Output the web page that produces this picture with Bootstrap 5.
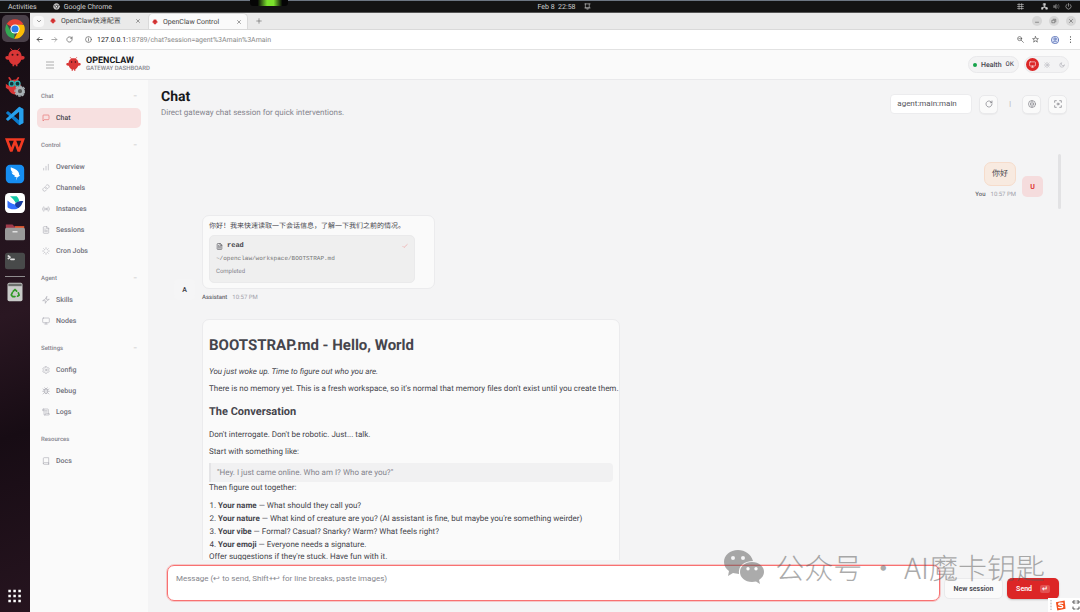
<!DOCTYPE html>
<html lang="en">
<head>
<meta charset="utf-8">
<meta name="viewport" content="width=device-width, initial-scale=1">
<title>OpenClaw Control</title>
<link href="https://cdn.jsdelivr.net/npm/bootstrap@5.3.0/dist/css/bootstrap.min.css" rel="stylesheet">
<style>
:root{--ink:#45454c;--muted:#84848d;--line:#e6e6e8;--red:#dc2626}
body{font-family:Roboto,"Noto Sans CJK SC",sans-serif;font-size:7px;line-height:10px;color:var(--ink);background:#f4f4f5;text-rendering:geometricPrecision}
svg{display:block;flex:none;fill:none;stroke:currentColor;stroke-width:2;stroke-linecap:round;stroke-linejoin:round}
a{color:inherit;text-decoration:none}
button{border:0;background:none;padding:0;color:inherit;font:inherit}
.i6{width:6px;height:6px}.i7{width:7px;height:7px}.i8{width:8px;height:8px}
/* desktop */
.topbar,.tabstrip,.urlbar,.apphead{flex:none}
.topbar{height:13px;background:#131313;color:#d0d0d0;border-top:1px solid #6d7682;border-bottom:1px solid #555;font-size:7px;position:relative}
.topbar>div{flex:1 1 0}
.glow{position:absolute;left:250px;top:-1px;width:38px;height:6px;border-radius:0 0 3px 3px;background:linear-gradient(90deg,#050505 20%,#7be22c 45%,#7be22c 62%,#050505 85%)}
.dock{width:30px;background:linear-gradient(160deg,#140c12,#2a1722 50%,#170c14 70%,#26141f);padding:1px 0 2px}
.dock button{flex:none;height:29px;width:30px;display:flex;align-items:center;justify-content:center}
.dock svg{width:20px;height:20px;stroke:none}
.dock .running span{background:#4a4049;border-radius:5px;width:27px;height:27px;display:flex;align-items:center;justify-content:center}
.dock hr{width:20px;margin:1px auto 0;border-color:#aaa;opacity:.8}
/* browser chrome */
.tabstrip{height:17px;background:#eaeaea;border-bottom:1px solid #d9d9d9;color:#444}
.tabstrip .down{width:11px;height:11px;border-radius:4px;background:#f8f8f8;margin-left:3px}
.btab{width:100px;height:16px;padding:0 5px 0 3px;gap:5px}
.btab.first{padding-left:4px;margin-left:2px}
.btab.on{background:#fafafa;border:1px solid #dadada;border-bottom:0;border-radius:5px 5px 0 0;margin-left:2px}
.wbtn{width:10px;height:10px;border-radius:50%;background:#d6d6d6;display:grid;place-items:center;color:#444}
.urlbar{height:20px;background:#fff;border-bottom:1px solid #e2e2e2;color:#444;gap:8px;padding:0 6px}
/* app header */
.apphead{height:30px;background:#fafafa;border-bottom:1px solid #e9e9eb;padding:0 11px 0 16px}
.brand{font-size:9px;font-weight:700;line-height:9px;color:#18181b}
.brand small{display:block;font-size:6px;line-height:6px;font-weight:500;color:#85858c}
.pill{height:17px;border:1px solid #e9e9eb;border-radius:9px;background:#f3f3f4;display:flex;align-items:center}
.dot{width:4px;height:4px;border-radius:50%;background:#16a34a}
.theme{width:13px;height:13px;border-radius:50%;display:grid;place-items:center;color:#a1a1aa}
.theme.on{background:var(--red);color:#fff}
.mono{font-family:"Liberation Mono","DejaVu Sans Mono",monospace}
/* sidebar */
.side{width:118px;background:#fafafa;padding:10px 7px 0}
.side section{margin-bottom:11px}
.side h2{font-size:6px;line-height:14px;font-weight:500;color:var(--muted);margin:0 4px 4px;display:flex;justify-content:space-between}
.side h2 span{color:#bbb}
.side .item{display:flex;align-items:center;gap:6px;height:20px;margin-bottom:1px;padding:0 5px;border-radius:5px;font-weight:500;color:#71717a}
.side .item:last-child{margin-bottom:0}
.side .item svg{color:#a1a1aa;width:8px;height:8px;stroke-width:1.6}
.side .item.on{background:#f7e0e0;color:var(--ink)}
.side .item.on svg{color:#e25555}
/* chat */
.pane{background:#f4f4f5;padding:0 13px}
.pane h1{font-size:14px;line-height:18px;font-weight:700;color:#18181b;margin:0}
.sub{font-size:8px;color:var(--muted);line-height:14px}
.tool{width:19px;height:19px;border:1px solid #e9e9eb;border-radius:5px;background:#fafafa;display:grid;place-items:center;color:#77777f;box-shadow:0 1px 1px #0000000a}
.sess{width:82px;height:20px;border:1px solid #ececee;border-radius:4px;background:#fff;appearance:none;padding:0 6px;font:inherit;font-size:8px;color:#55555c}
.thread{overflow:hidden;padding:0 18px 0 13px;margin:34px 6px 0 0;position:relative;flex:1 1 0}
.thumb{position:absolute;right:0;top:0;width:3px;height:55px;background:#e2e2e4;border-radius:2px}
.ava{width:21px;height:21px;border-radius:5px;display:grid;place-items:center;font-weight:600;background:#f5f5f6;flex:none;margin-bottom:3px}
.ava.me{background:#f5dcdd;color:var(--red)}
.bubble{background:#fafafa;border:1px solid #ebebed;border-radius:7px;padding:5px 6px}
.bubble.me{background:#f8eae0;border-color:#f6dccb;padding:6px 7px;font-size:8px}
.meta{font-size:6px;line-height:10px;color:#a1a1aa}
.meta b{font-weight:500;color:#66666d;margin-right:5px}
.toolcard{width:206px;background:#efefef;border:1px solid #eaeaeb;border-radius:5px;padding:4px 6px;margin-top:4px}
.toolcard .path{font-size:6px;line-height:14px;color:#777}
.toolcard .done{font-size:6px;line-height:12px;color:var(--muted)}
.md{width:418px;font-size:8px;line-height:12px;padding:16px 6px;margin:16px 0 0 28px;white-space:nowrap}
.md h1{font-size:15px;line-height:19px;font-weight:700;color:var(--ink);margin-bottom:11px}
.md h2{font-size:11px;line-height:14px;font-weight:700;margin:10px 0}
.md p{margin:0 0 5px}
.md blockquote{margin:0;border-left:2px solid #e4e4e6;background:#f1f1f2;border-radius:0 4px 4px 0;color:#84848d;line-height:19px;padding-left:6px}
.md ol{padding-left:9px;margin:5px 0 0;line-height:13px}
.compose{margin:5px 8px 11px 6px;gap:4px}
.compose textarea{height:36px;border:1px solid #f87171;outline:1px solid #f8717155;border-radius:7px;resize:none;padding:7px 8px;font-size:8px;line-height:11px;background:#fff}
.compose textarea::placeholder{color:#85858c}
.cbtn{height:21px;border-radius:5px;font-weight:600;margin-bottom:2px}
.new{width:59px;background:#fafafa;border:1px solid #eaeaec}
.send{width:52px;background:var(--red);color:#fff;display:flex;align-items:center;justify-content:center;gap:8px;box-shadow:0 1px 2px #0003}
.send kbd{font:inherit;padding:0 2px;line-height:8px;border-radius:2px;background:#ffffff33;font-family:"DejaVu Sans"}
/* floating overlays */
.mark-cn{position:absolute;right:35px;bottom:27px;gap:10px;font:300 29px/36px "Noto Sans CJK SC",sans-serif;color:#5a5a5a;opacity:.5;pointer-events:none;white-space:nowrap}
.mark-cn svg{width:42px;height:36px;stroke:none}
.ime{position:absolute;right:0;bottom:0;width:32px;height:14px;background:#fff;display:flex;align-items:center;gap:6px;padding-left:2px}
</style>
</head>
<body class="vh-100 overflow-hidden d-flex flex-column position-relative">
<svg class="d-none">
<symbol id="claw" viewBox="0 0 24 24" stroke="none"><path fill="#d93636" d="M12 2c5 0 8 4 8 8 2-1 4 0 3.500 2-.5 2-2.500 2-4 2-1 3-3 5-4.500 5.500V22h-2v-2h-2v2H9v-2.500C7 19 5.500 17 4.500 14c-1.500 0-3.500 0-4-2C0 10 2 9 4 10c0-4 3-8 8-8z"/><path stroke="#d93636" stroke-width="1.200" fill="none" d="M9 3L7 .8M15 3l2-2.200"/><circle cx="9" cy="8" r="1.200" fill="#3b1115"/><circle cx="15" cy="8" r="1.200" fill="#3b1115"/></symbol>
<symbol id="x" viewBox="0 0 24 24"><path d="M6 6l12 12M18 6L6 18"/></symbol>
<symbol id="chat" viewBox="0 0 24 24"><path d="M21 15a2 2 0 0 1-2 2H7l-4 4V5a2 2 0 0 1 2-2h14a2 2 0 0 1 2 2z"/></symbol>
<symbol id="bars" viewBox="0 0 24 24"><path d="M19 21V4M12 21V10M5 21v-5"/></symbol>
<symbol id="link" viewBox="0 0 24 24"><path d="M10 13a5 5 0 0 0 7.500.5l3-3a5 5 0 0 0-7-7l-1.700 1.700M14 11a5 5 0 0 0-7.500-.5l-3 3a5 5 0 0 0 7 7l1.700-1.700"/></symbol>
<symbol id="radio" viewBox="0 0 24 24"><circle cx="12" cy="12" r="2"/><path d="M16.200 7.800a6 6 0 0 1 0 8.400M7.800 16.200a6 6 0 0 1 0-8.400M19.500 5a10 10 0 0 1 0 14M4.500 19a10 10 0 0 1 0-14"/></symbol>
<symbol id="file" viewBox="0 0 24 24"><path d="M14 2H6a2 2 0 0 0-2 2v16a2 2 0 0 0 2 2h12a2 2 0 0 0 2-2V8zM14 2v6h6M16 13H8M16 17H8M10 9H8"/></symbol>
<symbol id="loader" viewBox="0 0 24 24"><path d="M12 2v4M12 18v4M5 5l2.800 2.800M16.200 16.200L19 19M2 12h4M18 12h4M5 19l2.800-2.800M16.200 7.800L19 5"/></symbol>
<symbol id="zap" viewBox="0 0 24 24"><path d="M14 2L10 9 2 14h8v8l4-7 8-5h-8z"/></symbol>
<symbol id="monitor" viewBox="0 0 24 24"><rect x="2" y="3" width="20" height="14" rx="2"/><path d="M8 21h8M12 17v4"/></symbol>
<symbol id="gear" viewBox="0 0 24 24"><circle cx="12" cy="12" r="3"/><path d="M10 2h4l1 3 2 1 3-.6 2 3.400L20 11v2l2 2.200-2 3.400-3-.6-2 1-1 3h-4l-1-3-2-1-3 .6-2-3.400L4 13v-2L2 8.800l2-3.400L7 6l2-1z"/></symbol>
<symbol id="bug" viewBox="0 0 24 24"><path d="M8 2l2 2M16 2l-2 2M8 8a4 4 0 0 1 8 0M7 8h10v7a5 5 0 0 1-10 0zM12 20V11M7 9L3 6M17 9l4-3M7 13H2M17 13h5M7 17l-4 4M17 17l4 4"/></symbol>
<symbol id="scroll" viewBox="0 0 24 24"><path d="M8 21h12a2 2 0 0 0 2-2v-2H10v2a2 2 0 0 1-4 0V5a2 2 0 1 0-4 0v3h4M4 3h13a2 2 0 0 1 2 2v12M10 8h5M10 12h5"/></symbol>
<symbol id="book" viewBox="0 0 24 24"><path d="M4 19.500A2.500 2.500 0 0 1 6.500 17H20v5H6.500A2.500 2.500 0 0 1 4 19.500V4.500A2.500 2.500 0 0 1 6.500 2H20v20"/></symbol>
<symbol id="reload" viewBox="0 0 24 24"><path d="M21 12a9 9 0 1 1-3-6.700L21 8M21 3v5h-5"/></symbol>
<symbol id="star" viewBox="0 0 24 24"><path d="M12 2l3 7h7l-5.500 4.500L18.500 21 12 16.500 5.500 21l2-7.500L2 9h7z"/></symbol>
</svg>

<header class="topbar d-flex align-items-center">
  <div class="d-flex align-items-center ps-2"><span>Activities</span><svg class="i7 ms-3 me-1" viewBox="0 0 24 24"><circle cx="12" cy="12" r="10" fill="#bbb"/><circle cx="12" cy="12" r="4" fill="#eee" stroke="#444"/><path stroke="#444" d="M12 8h9M8.500 14L4 7M15.500 14L11 22"/></svg><span>Google Chrome</span></div>
  <div class="d-flex align-items-center justify-content-center gap-2 ps-5"><span>Feb 8&nbsp; 22:58</span><svg class="i7" viewBox="0 0 24 24"><path d="M6 3h12v14H6zM3 3h3M18 3h3M3 17h18M10 21h4"/></svg></div>
  <div class="d-flex align-items-center justify-content-end pe-2" style="gap:5px"><svg class="i7 me-2" viewBox="0 0 24 24"><path d="M7 2v20M16 2v20M2 5h20M2 12h20M2 19h20"/></svg><svg class="i7 ms-1" viewBox="0 0 24 24"><path fill="currentColor" d="M9 2h6v6H9zM2 16h5v5H2zM17 16h5v5h-5zM12 8v5M4 16l8-4 8 4"/></svg><svg class="i7 opacity-50" viewBox="0 0 24 24"><path fill="currentColor" d="M2 9h4l5-5v16l-5-5H2z"/><path d="M15 8q3 4 0 8M19 5q5 7 0 14"/></svg><svg class="i7" viewBox="0 0 24 24"><path d="M12 2v9M6 5a9 9 0 1 0 12 0"/></svg></div>
  <i class="glow"></i>
</header>

<div class="d-flex flex-fill" style="min-height:0">
<nav class="dock d-flex flex-column flex-shrink-0" aria-label="Dock">
  <button class="running" aria-label="Chrome"><span><svg viewBox="0 0 24 24"><path fill="#ea4335" d="M12 12L2 6a11.600 11.600 0 0 1 20 0z"/><path fill="#34a853" d="M12 12l-1 11.600A11.600 11.600 0 0 1 2 6l5 9z"/><path fill="#fbbc05" d="M12 7h10.500A11.600 11.600 0 0 1 11 23.600l5-9z"/><circle cx="12" cy="12" r="5.500" fill="#fff"/><circle cx="12" cy="12" r="4.300" fill="#2b7de9"/></svg></span></button>
  <button aria-label="OpenClaw"><svg><use href="#claw"/></svg></button>
  <button aria-label="OpenClaw setup"><svg viewBox="0 0 24 24"><path fill="#d93636" d="M12 3c5 0 7 4 7 8s-3 10-7 10-8-4-8-8 3-10 8-10zM1 8l4 3-1 4-3-2z"/><path stroke="#d93636" d="M7 4L5 1M14 4l2-3"/><g stroke="#2bb5b5" stroke-width="1.500" fill="#14333a"><circle cx="8" cy="8" r="3"/><circle cx="15" cy="8" r="3"/></g><circle cx="18" cy="17" r="4" fill="#555" stroke="#a9b1b5" stroke-width="3"/><circle cx="18" cy="17" r="6" fill="none" stroke="#a9b1b5" stroke-width="1.600" stroke-dasharray="2 2.500"/></svg></button>
  <button aria-label="Code"><svg viewBox="0 0 24 24"><path fill="#0a7acb" d="M17 1l5 2.500v17L17 23 1 8.500 3.500 6 17 17z"/><path fill="#27a0ec" d="M17 1v6L3.500 18 1 15.500zM17 1l5 2.500v17L17 23z"/></svg></button>
  <button aria-label="WPS"><svg viewBox="0 0 24 24"><path fill="#f23a22" fill-rule="evenodd" d="M0 4h24l-6 16h-3l-3-8-3 8H6zM4.500 7l3 8L10.500 7zM13.500 7l3 8 3-8z"/></svg></button>
  <button aria-label="Bird"><svg viewBox="0 0 24 24"><rect x="1" y="1" width="22" height="22" rx="5" fill="#168df2"/><path fill="#fff" d="M7 4c5 2 10 4 10 9l1 1-3 2-2 4 1-4-3-1 1-1c-3-1-4-3-4-4l2 .5C7 9 6.500 6 7 4z"/></svg></button>
  <button aria-label="Lark"><svg viewBox="0 0 24 24"><rect width="24" height="24" rx="5" fill="#fff"/><path fill="#14c8a8" d="M6 4h8c2 2 3 4 3 6l-4 2C11 9 9 6 6 4z"/><path fill="#3370ff" d="M3 9c4 4 8 5 12 5l2 3c-4 4-11 3-14 0z"/><path fill="#183c9e" d="M12 13c3-3 6-4 10-3-2 3-2 6-6 8-3-1-4-3-4-5z"/></svg></button>
  <button aria-label="Files"><svg viewBox="0 0 24 24"><path fill="#a03a4a" d="M1 3h8l2 2h12v6H1z"/><path fill="#e0562b" d="M12 5h11v4H12z"/><rect y="7" width="24" height="15" rx="2" fill="#999"/><path fill="#eee" d="M9 11h6v1.500H9z"/></svg></button>
  <button aria-label="Terminal"><svg viewBox="0 0 24 24"><rect y="2" width="24" height="20" rx="3" fill="#484a4a"/><path fill="none" stroke="#ddd" d="M4 6l2 1.500L4 9M7 10h4"/></svg></button>
  <hr>
  <button aria-label="Trash"><svg viewBox="0 0 24 24"><rect x="3" y="1" width="18" height="22" rx="2" fill="#c9cbc9"/><path fill="#6c6f6c" d="M4 2h16v3H4z"/><path fill="none" stroke="#2f9a25" stroke-width="2" d="M10 11l2-2 2 2M16 13l1 3-2 1M12 17.500H9l-1.500-2L9 12.500"/></svg></button>
  <button class="mt-auto" aria-label="Show applications"><svg viewBox="0 0 24 24"><path stroke="#fff" stroke-width="3" stroke-linecap="butt" stroke-dasharray="3 3" d="M4 6h15M4 12h15M4 18h15"/></svg></button>
</nav>

<div class="d-flex flex-column flex-fill" style="min-width:0">
  <div class="tabstrip d-flex align-items-end">
    <button class="down align-self-center d-grid" style="place-items:center" aria-label="Search tabs"><svg class="i6" viewBox="0 0 24 24"><path d="M5 9l7 7 7-7"/></svg></button>
    <div class="btab first d-flex align-items-center"><svg class="i6"><use href="#claw"/></svg><span class="flex-fill">OpenClaw快速配置</span><button aria-label="Close"><svg class="i6"><use href="#x"/></svg></button></div>
    <div class="btab on d-flex align-items-center"><svg class="i6"><use href="#claw"/></svg><span class="flex-fill">OpenClaw Control</span><button aria-label="Close"><svg class="i6"><use href="#x"/></svg></button></div>
    <button class="align-self-center ms-1 ps-1" aria-label="New tab"><svg class="i6" viewBox="0 0 24 24"><path d="M12 3v18M3 12h18"/></svg></button>
    <div class="ms-auto align-self-center d-flex pe-1" style="gap:7px"><button class="wbtn" aria-label="Minimise"><svg class="i6" viewBox="0 0 24 24"><path d="M6 17h12"/></svg></button><button class="wbtn" aria-label="Restore"><svg class="i6" viewBox="0 0 24 24"><path d="M5 9h10v10H5zM9 5h10v10"/></svg></button><button class="wbtn" aria-label="Close window"><svg class="i6"><use href="#x"/></svg></button></div>
  </div>
  <div class="urlbar d-flex align-items-center">
    <button aria-label="Back"><svg class="i7" viewBox="0 0 24 24"><path stroke-width="3" d="M21 12H4M11 5l-7 7 7 7"/></svg></button>
    <button aria-label="Forward" class="opacity-50"><svg class="i7" viewBox="0 0 24 24"><path stroke-width="3" d="M3 12h17M13 5l7 7-7 7"/></svg></button>
    <button aria-label="Reload"><svg class="i7" stroke-width="3"><use href="#reload"/></svg></button>
    <svg class="i7 ms-1" viewBox="0 0 24 24"><circle cx="12" cy="12" r="10"/><path d="M12 11v6M12 7v1"/></svg>
    <a class="flex-fill" href="#" style="color:#888;margin-left:-3px"><span style="color:#222">127.0.0.1:</span>18789/chat?session=agent%3Amain%3Amain</a>
    <svg class="i7" viewBox="0 0 24 24"><circle cx="9" cy="9" r="7"/><path d="M14 14l8 8M6 9h6"/></svg>
    <button aria-label="Bookmark" class="me-1"><svg class="i7"><use href="#star"/></svg></button>
    <svg class="i8" style="color:#4b63ad" viewBox="0 0 24 24"><circle cx="12" cy="12" r="11" fill="#d5def5"/><circle cx="12" cy="9" r="3.500"/><path d="M6 18q6-7 12 0"/></svg>
    <button aria-label="Menu"><svg class="i7" viewBox="0 0 24 24"><path stroke-width="4" d="M12 3v.1M12 12v.1M12 21v.1"/></svg></button>
  </div>

  <header class="apphead d-flex align-items-center">
    <button aria-label="Toggle menu" style="color:#888"><svg class="i8" viewBox="0 0 24 24"><path d="M1 3h22M1 12h22M1 21h22"/></svg></button>
    <svg style="width:15px;height:15px;margin:0 5px 0 12px"><use href="#claw"/></svg>
    <div class="brand">OPENCLAW<small>GATEWAY DASHBOARD</small></div>
    <div class="pill ms-auto px-1 gap-1" style="margin-right:5px"><i class="dot"></i><span class="fw-medium">Health</span><span class="mono">OK</span></div>
    <div class="pill gap-1"><button class="theme on" style="margin-left:1px" aria-label="System"><svg class="i7"><use href="#monitor"/></svg></button><button class="theme" style="width:8px" aria-label="Light"><svg class="i6" viewBox="0 0 24 24"><circle cx="12" cy="12" r="4"/><path d="M12 1v3M12 20v3M1 12h3M20 12h3M4 4l2 2M18 18l2 2M4 20l2-2M18 6l2-2"/></svg></button><button class="theme" aria-label="Dark"><svg class="i6" viewBox="0 0 24 24"><path d="M21 13A9 9 0 1 1 11 3a7 7 0 0 0 10 10z"/></svg></button></div>
  </header>

  <div class="d-flex flex-fill" style="min-height:0">
    <nav class="side flex-shrink-0" aria-label="Main">
      <section><h2>Chat<span>–</span></h2><a href="#" class="item on"><svg><use href="#chat"/></svg>Chat</a></section>
      <section><h2>Control<span>–</span></h2>
        <a href="#" class="item"><svg><use href="#bars"/></svg>Overview</a><a href="#" class="item"><svg><use href="#link"/></svg>Channels</a><a href="#" class="item"><svg><use href="#radio"/></svg>Instances</a><a href="#" class="item"><svg><use href="#file"/></svg>Sessions</a><a href="#" class="item"><svg><use href="#loader"/></svg>Cron Jobs</a></section>
      <section><h2>Agent<span>–</span></h2><a href="#" class="item"><svg><use href="#zap"/></svg>Skills</a><a href="#" class="item"><svg><use href="#monitor"/></svg>Nodes</a></section>
      <section><h2>Settings<span>–</span></h2><a href="#" class="item"><svg><use href="#gear"/></svg>Config</a><a href="#" class="item"><svg><use href="#bug"/></svg>Debug</a><a href="#" class="item"><svg><use href="#scroll"/></svg>Logs</a></section>
      <section><h2>Resources</h2><a href="#" class="item"><svg><use href="#book"/></svg>Docs</a></section>
    </nav>

    <main class="pane d-flex flex-column flex-fill" style="min-width:0">
      <div class="d-flex justify-content-between pt-2">
        <div><h1>Chat</h1><div class="sub">Direct gateway chat session for quick interventions.</div></div>
        <div class="d-flex align-items-center" style="gap:7px">
          <select class="sess" aria-label="Session"><option>agent:main:main</option></select>
          <button class="tool" aria-label="Refresh"><svg class="i8"><use href="#reload"/></svg></button>
          <span style="color:#a1a1aa;padding:0 4px">|</span>
          <button class="tool" aria-label="Thinking"><svg class="i8" viewBox="0 0 24 24"><circle cx="12" cy="12" r="10.500"/><path d="M12 3v18M9 7q-4 2-1 5-3 3 1 5M15 7q4 2 1 5 3 3-1 5"/></svg></button>
          <button class="tool" aria-label="Focus"><svg class="i8" viewBox="0 0 24 24"><path d="M2 7V2h5M17 2h5v5M22 17v5h-5M7 22H2v-5"/><circle cx="12" cy="12" r="3"/></svg></button>
        </div>
      </div>
      <div class="thread">
        <i class="thumb"></i>
        <div class="d-flex justify-content-end align-items-end pt-2" style="gap:6px">
          <div class="text-end"><div class="d-flex justify-content-end"><div class="bubble me">你好</div></div><div class="meta pt-1"><b>You</b>10:57 PM</div></div>
          <div class="ava me">U</div>
        </div>
        <div class="d-flex align-items-end" style="gap:7px;margin-top:15px">
          <div class="ava">A</div>
          <div><div class="bubble" style="width:233px">
              <div>你好！我来快速读取一下会话信息，了解一下我们之前的情况。</div>
              <div class="toolcard"><div class="d-flex align-items-center mono fw-bold" style="gap:4px;line-height:12px"><svg class="i7"><use href="#file"/></svg><span class="flex-fill">read</span><svg class="i6" style="color:#e88" viewBox="0 0 24 24"><path d="M3 13l5 5L21 6"/></svg></div>
              <div class="mono path">~/openclaw/workspace/BOOTSTRAP.md</div><div class="done">Completed</div></div>
            </div><div class="meta pt-1"><b>Assistant</b>10:57 PM</div></div>
        </div>
        <article class="bubble md">
          <h1>BOOTSTRAP.md - Hello, World</h1>
          <p><em>You just woke up. Time to figure out who you are.</em></p>
          <p>There is no memory yet. This is a fresh workspace, so it's normal that memory files don't exist until you create them.</p>
          <h2>The Conversation</h2>
          <p>Don't interrogate. Don't be robotic. Just... talk.</p>
          <p>Start with something like:</p>
          <blockquote>"Hey. I just came online. Who am I? Who are you?"</blockquote>
          <div>Then figure out together:</div>
          <ol><li><strong>Your name</strong> — What should they call you?</li><li><strong>Your nature</strong> — What kind of creature are you? (AI assistant is fine, but maybe you're something weirder)</li><li><strong>Your vibe</strong> — Formal? Casual? Snarky? Warm? What feels right?</li><li><strong>Your emoji</strong> — Everyone needs a signature.</li></ol>
          <div>Offer suggestions if they're stuck. Have fun with it.</div>
        </article>
      </div>
      <form class="compose d-flex align-items-end">
        <textarea class="flex-fill" aria-label="Message" placeholder="Message (↩ to send, Shift+↩ for line breaks, paste images)"></textarea>
        <button type="button" class="cbtn new">New session</button>
        <button type="button" class="cbtn send">Send <kbd>↵</kbd></button>
      </form>
    </main>
  </div>
</div>
</div>

<div class="mark-cn d-flex align-items-center"><svg viewBox="0 0 42 36"><path fill="currentColor" fill-rule="evenodd" d="M15 1C7 1 1 6 1 13c0 4 2 7 5 9l-1 5 5-3 6 1c-1-8 5-13 14-13C28 5 22 1 15 1zM10 7a2 2 0 1 1 0 4 2 2 0 0 1 0-4zM20 7a2 2 0 1 1 0 4 2 2 0 0 1 0-4z"/><path fill="currentColor" fill-rule="evenodd" d="M29 13c-7 0-12 4.500-12 10s5 10 12 10l4-.6 4 2.600-1-4c3-2 5-5 5-8 0-5.500-5-10-12-10zM25 18a1.700 1.700 0 1 1 0 3.400 1.700 1.700 0 0 1 0-3.400zM33 18a1.700 1.700 0 1 1 0 3.400 1.700 1.700 0 0 1 0-3.400z"/></svg><span>公众号 · AI魔卡钥匙</span></div>
<div class="ime"><svg style="width:2px;height:10px;color:#aaa" viewBox="0 0 2 10"><path stroke-width="1" stroke-dasharray="1 2" d="M1 0v10"/></svg><svg style="width:11px;height:11px;stroke:none;margin-left:-3px" viewBox="0 0 24 24"><path fill="#f4511e" d="M2 5l19-4 2 18-18 4z"/><path fill="none" stroke="#fff" stroke-width="3" d="M17 7q-9-1-9 2c0 3 9 2 9 5s-5 3-9 2"/></svg><svg style="width:8px;height:12px;color:#555" viewBox="0 0 8 12"><path stroke-width="1" d="M3 2H1v2h2M5 2h2v2H5M1 8v2h2M5 10h2V8"/></svg></div>
<script src="https://cdn.jsdelivr.net/npm/bootstrap@5.3.0/dist/js/bootstrap.bundle.min.js"></script>
</body>
</html>
